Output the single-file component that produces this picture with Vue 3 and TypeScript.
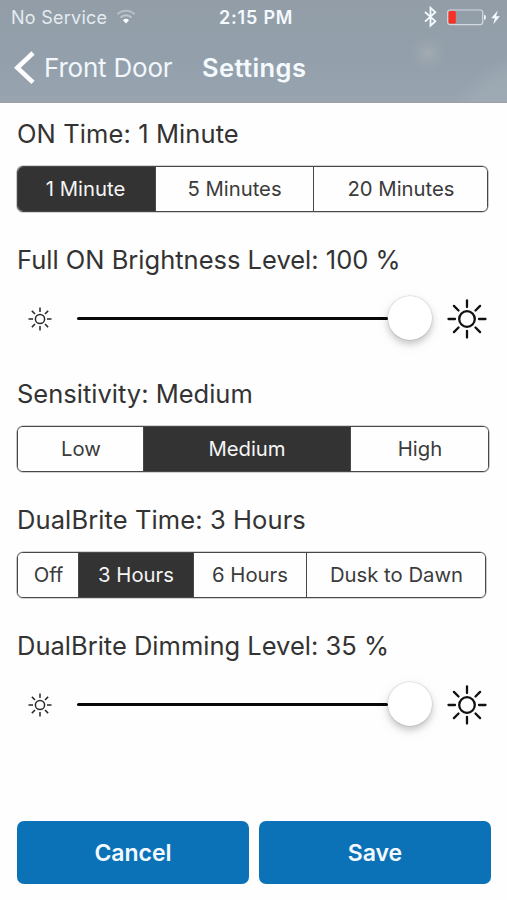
<script setup lang="ts">
import { reactive } from 'vue'

interface Segment { label: string; width: number }
interface SegmentSection { kind: 'segments'; id: string; title: string; options: Segment[]; selected: number }
interface SliderSection { kind: 'slider'; id: string; title: string; value: number; position: number }
type Section = SegmentSection | SliderSection

const sections = reactive<Section[]>([
  {
    kind: 'segments', id: 'on', title: 'ON Time', selected: 0,
    options: [{ label: '1 Minute', width: 138 }, { label: '5 Minutes', width: 158 }, { label: '20 Minutes', width: 175 }],
  },
  { kind: 'slider', id: 'full', title: 'Full ON Brightness Level', value: 100, position: 310.5 },
  {
    kind: 'segments', id: 'sens', title: 'Sensitivity', selected: 1,
    options: [{ label: 'Low', width: 126 }, { label: 'Medium', width: 207 }, { label: 'High', width: 139 }],
  },
  {
    kind: 'segments', id: 'dual', title: 'DualBrite Time', selected: 1,
    options: [{ label: 'Off', width: 61 }, { label: '3 Hours', width: 115 }, { label: '6 Hours', width: 113 }, { label: 'Dusk to Dawn', width: 180 }],
  },
  { kind: 'slider', id: 'dim', title: 'DualBrite Dimming Level', value: 35, position: 310.5 },
])

const rays = [0, 45, 90, 135, 180, 225, 270, 315]
</script>

<template>
  <div class="screen">
    <header class="top">
      <div class="status">
        <div class="carrier">
          <span class="service">No Service</span>
          <svg class="wifi" width="20" height="16" viewBox="0 0 20 16" fill="none">
            <path d="M1.4 5.2a12.3 12.3 0 0 1 17.2 0" stroke="#fff" stroke-opacity=".36" stroke-width="2" />
            <path d="M4.5 8.6a7.8 7.8 0 0 1 11 0" stroke="#fff" stroke-opacity=".42" stroke-width="2" />
            <path d="M7 11.2a4.3 4.3 0 0 1 6 0L10 14.4z" fill="#fff" />
          </svg>
        </div>
        <span class="clock">2:15 PM</span>
        <div class="indicators">
          <svg width="13" height="22" viewBox="0 0 13 22" fill="none" stroke="#f6fbff" stroke-width="1.8">
            <path d="M1 6l10.3 9.2-4.8 4.4V1.8l4.8 4.4L1 15.6" />
          </svg>
          <svg class="battery" width="40" height="17" viewBox="0 0 40 17">
            <rect x=".7" y="1" width="35" height="14.6" rx="2.4" fill="none" stroke="#d2dae0" stroke-width="1.2" />
            <rect x="1.6" y="2" width="7.2" height="12.6" rx="1" fill="#fb3024" />
            <path d="M37 5.4q2 .5 2 2.9t-2 2.9z" fill="#eaf0f4" />
          </svg>
          <svg class="bolt" width="9" height="15" viewBox="0 0 9 15">
            <path d="M6.8.6L.2 8.2h3.7L2.2 14.3 8.9 6.3H5.1z" fill="#f6fbff" />
          </svg>
        </div>
      </div>
      <nav class="nav">
        <svg class="chevron" width="21" height="34" viewBox="0 0 21 34" fill="none">
          <path d="M19 2L3.3 16.8 19 31.4" stroke="#fff" stroke-width="4.6" />
        </svg>
        <span class="back">Front Door</span>
        <h1 class="title">Settings</h1>
      </nav>
    </header>

    <main class="content">
      <section v-for="s in sections" :key="s.id" :class="['section', s.id]">
        <template v-if="s.kind === 'segments'">
          <h2 class="heading"><span>{{ s.title }}: {{ s.options[s.selected].label }}</span></h2>
          <div class="segments">
            <button
              v-for="(o, i) in s.options"
              :key="o.label"
              :class="['segment', { active: i === s.selected }]"
              :style="{ width: o.width + 'px' }"
              @click="s.selected = i"
            ><span>{{ o.label }}</span></button>
          </div>
        </template>
        <template v-else>
          <h2 class="heading"><span>{{ s.title }}: {{ s.value }} %</span></h2>
          <div class="slider">
            <svg class="sun-small" width="26" height="26" viewBox="-13 -13 26 26" fill="none" stroke="#292929" stroke-width="1.5">
              <circle r="4.6" />
              <line v-for="r in rays" :key="r" x1="7" x2="11.5" :transform="`rotate(${r})`" />
            </svg>
            <div class="track">
              <div class="line" :style="{ width: s.position + 'px' }"></div>
              <div class="thumb"></div>
            </div>
            <svg class="sun-large" width="42" height="42" viewBox="-21 -21 42 42" fill="none" stroke="#111" stroke-width="2.3" stroke-linecap="round">
              <circle r="7.8" />
              <line v-for="r in rays" :key="r" x1="12" x2="18.5" :transform="`rotate(${r})`" />
            </svg>
          </div>
        </template>
      </section>
    </main>

    <footer class="actions">
      <button class="action"><span>Cancel</span></button>
      <button class="action"><span>Save</span></button>
    </footer>
  </div>
</template>

<style>
body { margin: 0; background: #fefefe; }
</style>

<style scoped>
.screen {
  width: 507px;
  height: 900px;
  overflow: hidden;
  background: #fefefe;
  color: #333;
  font-family: Inter, "Liberation Sans", sans-serif;
}
button { font: inherit; border: 0; margin: 0; padding: 0; }
.top {
  box-sizing: border-box;
  height: 103px;
  border-bottom: 1px solid #a39fa7;
  color: #f5faff;
  background:
    radial-gradient(circle at 428px 53px, rgba(176, 181, 183, .55) 0, rgba(165, 173, 178, .3) 9px, transparent 18px),
    radial-gradient(circle at 535px 140px, rgba(165, 178, 187, .4) 0 70px, transparent 90px),
    linear-gradient(#929da7, #93a0ab 60%, #98a5b0);
}
.status {
  height: 34px;
  display: grid;
  grid-template-columns: 219px 1fr auto;
  align-items: center;
  font-size: 18px;
}
.carrier { display: flex; align-items: center; padding-left: 11px; }
.service { color: #e5ebf0; letter-spacing: .25px; white-space: nowrap; }
.wifi { margin-left: 9px; }
.clock { font-weight: 600; letter-spacing: .8px; }
.indicators { display: flex; align-items: center; padding-right: 7px; }
.battery { margin-left: 10px; }
.bolt { margin-left: 4px; }
.nav { height: 66px; display: flex; align-items: center; padding-left: 14px; font-size: 26px; }
.chevron { margin: 1px 9px 0 0; }
.back { width: 158px; white-space: nowrap; color: #f1f7fc; letter-spacing: -.2px; }
.title { margin: 0; font-size: 25.5px; font-weight: 600; letter-spacing: .4px; }
.content { padding: 15px 0 0 17px; }
.heading {
  margin: 0 0 16px;
  height: 32px;
  line-height: 32px;
  font-size: 25.5px;
  font-weight: 400;
  white-space: nowrap;
}
.on .heading, .dual .heading { letter-spacing: .1px; }
.full .heading, .dim .heading { margin-bottom: 0; }
.section { margin-bottom: 32px; }
.section.full { margin-bottom: 16px; }
.section.dim { margin-bottom: 0; }
.segments {
  box-sizing: border-box;
  display: inline-flex;
  vertical-align: top;
  height: 46px;
  border: 1px solid #484848;
  border-radius: 6px;
  box-shadow: 0 0 0 .6px rgba(60, 60, 60, .45);
  overflow: hidden;
}
.segment {
  box-sizing: border-box;
  flex: none;
  padding-bottom: 2px;
  background: #fefefe;
  color: #3b3b3b;
  font-size: 20.3px;
  white-space: nowrap;
}
.segment:first-child, .segment:last-child { margin-right: -1px; }
.segment + .segment { border-left: 1px solid #484848; }
.segment.active { background: #333; color: #f5f5f5; }
.on .segment:first-child { padding-right: 3px; }
.slider { position: relative; top: -.5px; height: 86px; display: flex; align-items: center; }
.sun-small { margin-left: 10px; }
.track { width: 355px; height: 45px; margin-left: 24px; display: flex; align-items: center; }
.line { height: 3px; border-radius: 2px; background: #080808; }
.thumb {
  flex: none;
  width: 44px;
  height: 44px;
  margin-top: -2px;
  border-radius: 50%;
  background: #fff;
  box-shadow: 0 0 1px 0.5px rgba(0, 0, 0, .14), 0 4px 7px rgba(0, 0, 0, .2), 0 4px 18px rgba(0, 0, 0, .05);
}
.sun-large { margin-left: 14px; }
.actions { display: flex; gap: 10px; padding: 73px 0 0 17px; }
.action {
  width: 232px;
  height: 63px;
  border-radius: 7px;
  background: #0c72b7;
  color: #f4faff;
  font-size: 23px;
  font-weight: 600;
}
</style>
